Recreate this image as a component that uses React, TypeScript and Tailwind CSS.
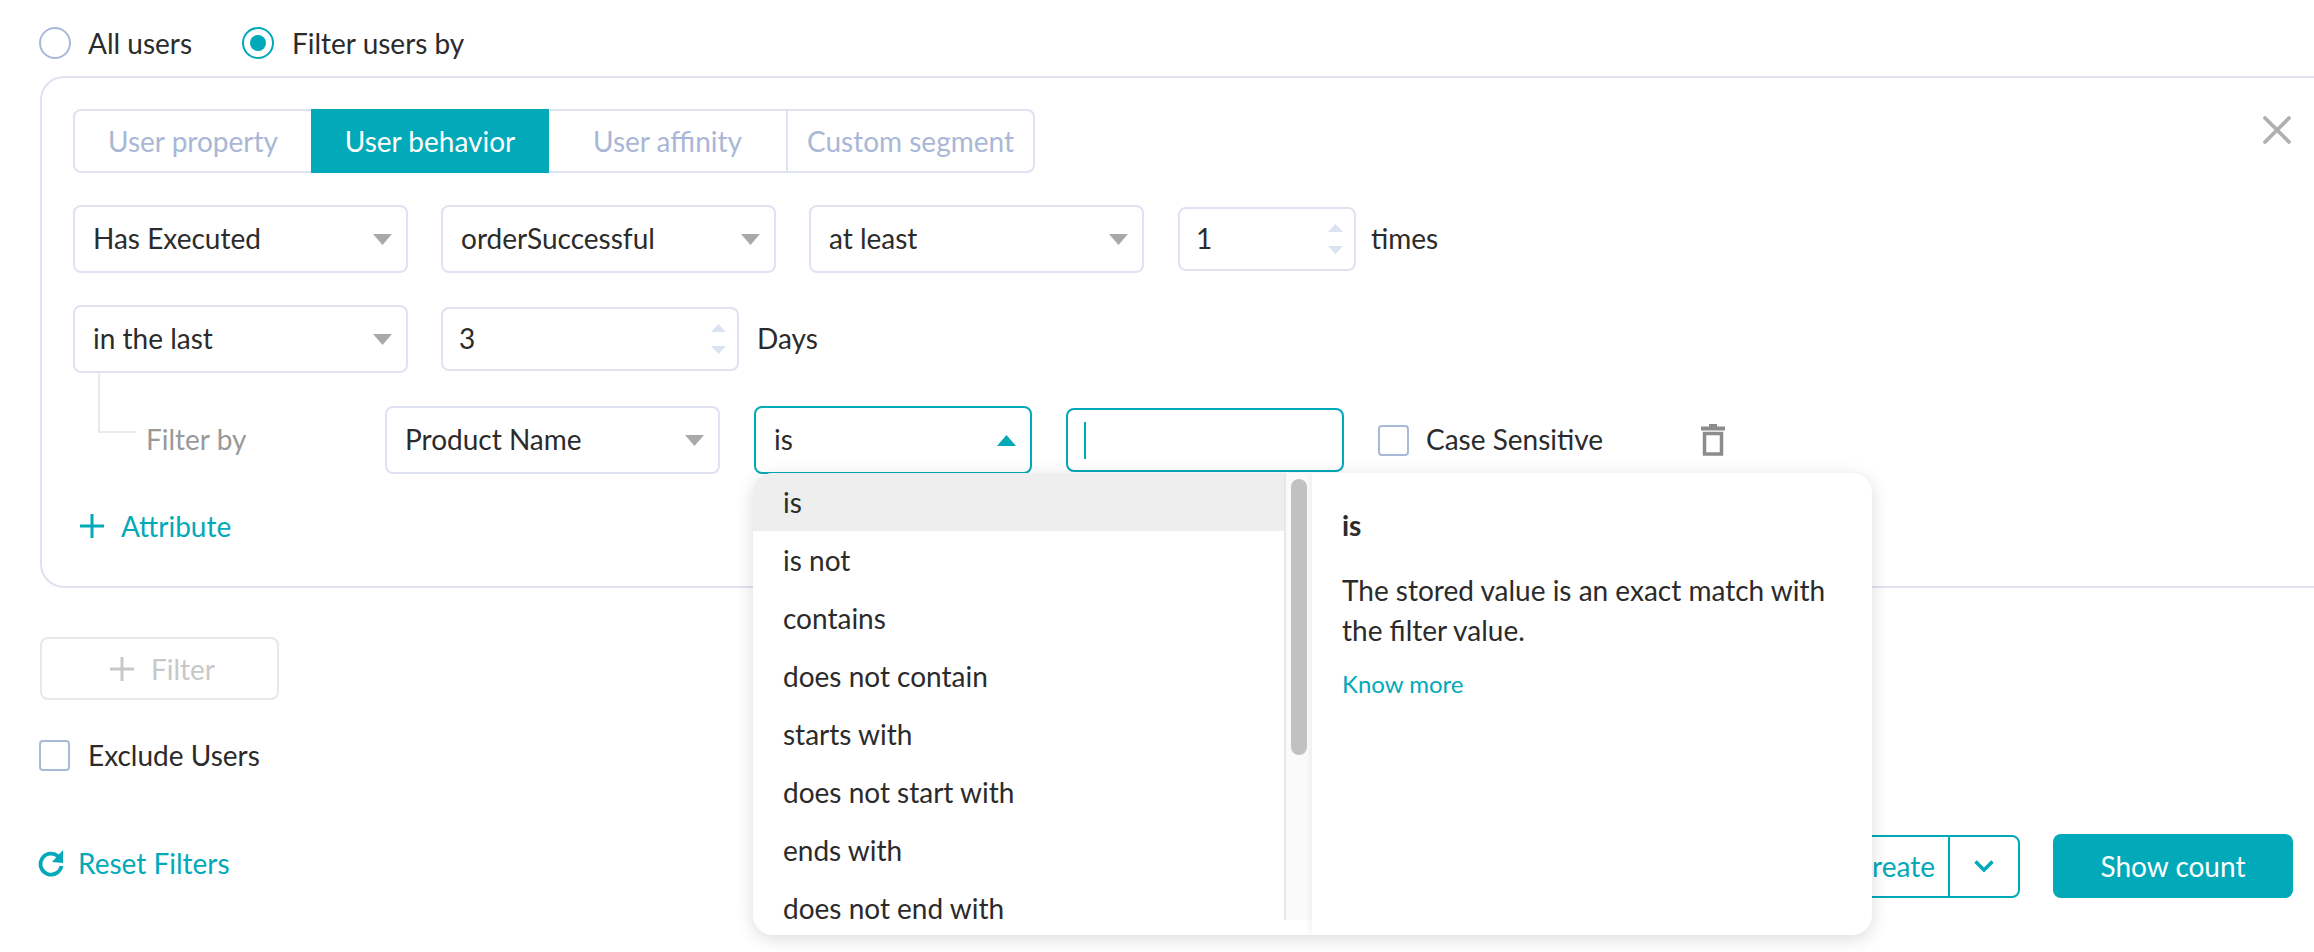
import { X } from "lucide-react";

const font = "font-['Lato','Liberation_Sans',sans-serif]";
const ops = ["is", "is not", "contains", "does not contain", "starts with", "does not start with", "ends with", "does not end with"];

function Arrow({ up = false, teal = false }: { up?: boolean; teal?: boolean }) {
  return (
    <svg width="19" height="11" viewBox="0 0 19 11" className="absolute right-[14px] top-[27px]">
      <path d={up ? "M9.5 0L19 11H0z" : "M0 0h19L9.5 11z"} fill={teal ? "#02a9b8" : "#a9a9a9"} />
    </svg>
  );
}

function PlusIcon() {
  return (
    <svg width="24" height="24" viewBox="0 0 24 24" className="shrink-0">
      <path d="M12 0v24M0 12h24" stroke="currentColor" strokeWidth="3" fill="none" />
    </svg>
  );
}

function Select({ label, w, active, up }: { label: string; w: string; active?: boolean; up?: boolean }) {
  return (
    <div className={`relative h-[68px] ${w} rounded-[8px] border-2 ${active ? "border-[#02a9b8]" : "border-[#dfe2f0]"} flex items-center pl-[18px] pb-[2px] text-[#2b2b2b] bg-white`}>
      {label}
      <Arrow up={up} teal={active} />
    </div>
  );
}

function NumInput({ value, w }: { value: string; w: string }) {
  return (
    <div className={`relative h-[64px] ${w} rounded-[8px] border-2 border-[#dfe2f0] flex items-center pl-[16px] pb-[2px] text-[#2b2b2b]`}>
      {value}
      <svg width="15" height="30" viewBox="0 0 15 30" className="absolute right-[11px] top-[15px]">
        <path d="M7.5 0L15 8H0zM0 22h15L7.5 30z" fill="#dbe2f2" />
      </svg>
    </div>
  );
}

function Box() {
  return <div className="w-[31px] h-[31px] rounded-[4px] border-2 border-[#aab8d8] shrink-0" />;
}

export default function App() {
  return (
    <div className={`${font} relative w-[2314px] h-[952px] overflow-hidden bg-white text-[28px] text-[#2b2b2b]`}>
      <div className="flex items-center h-[32px] mt-[27px] ml-[39px]">
        <div className="w-[32px] h-[32px] rounded-full border-2 border-[#aab8d8]" />
        <span className="ml-[17px] w-[154px]">All users</span>
        <div className="w-[32px] h-[32px] rounded-full border-2 border-[#02a9b8] flex items-center justify-center">
          <div className="w-[16px] h-[16px] rounded-full bg-[#02a9b8]" />
        </div>
        <span className="ml-[18px]">Filter users by</span>
      </div>

      <div className="relative mt-[17px] ml-[40px] w-[2320px] h-[512px] rounded-[24px] border-2 border-[#dfe2f0] pl-[31px] pt-[31px]">
        <div className="flex w-[962px] h-[64px] rounded-[8px] border-2 border-[#dfe2f0] text-[#a9b7d6]">
          <div className="w-[236px] flex items-center justify-center">User property</div>
          <div className="w-[238px] -my-[2px] flex items-center justify-center bg-[#02a9b8] text-white">User behavior</div>
          <div className="w-[239px] flex items-center justify-center border-r-2 border-[#dfe2f0]">User affinity</div>
          <div className="flex-1 flex items-center justify-center">Custom segment</div>
        </div>

        <div className="flex items-center gap-[33px] mt-[32px]">
          <Select label="Has Executed" w="w-[335px]" />
          <Select label="orderSuccessful" w="w-[335px]" />
          <Select label="at least" w="w-[335px]" />
          <div className="flex items-center ml-[1px]">
            <NumInput value="1" w="w-[178px]" />
            <span className="ml-[15px] mb-[2px]">times</span>
          </div>
        </div>

        <div className="flex items-center gap-[33px] mt-[32px]">
          <Select label="in the last" w="w-[335px]" />
          <div className="flex items-center">
            <NumInput value="3" w="w-[298px]" />
            <span className="ml-[18px] mb-[2px]">Days</span>
          </div>
        </div>

        <div className="flex items-center mt-[33px]">
          <div className="relative w-[73px] h-[68px]">
            <div className="absolute left-[25px] -top-[33px] w-[38px] h-[60px] border-l-2 border-b-2 border-[#eaeaea]" />
          </div>
          <span className="text-[#999999] w-[239px] mb-[2px]">Filter by</span>
          <Select label="Product Name" w="w-[335px]" />
          <div className="w-[34px]" />
          <Select label="is" w="w-[278px]" active up />
          <div className="w-[34px]" />
          <div className="w-[278px] h-[64px] rounded-[8px] border-2 border-[#02a9b8] flex items-center pl-[16px]">
            <div className="w-[2px] h-[37px] bg-[#02a9b8]" />
          </div>
          <div className="ml-[34px]"><Box /></div>
          <span className="ml-[17px] w-[275px] mb-[2px]">Case Sensitive</span>
          <svg width="24" height="32" viewBox="0 0 24 32">
            <path d="M8 0h8v2.500h8V6.500H0V2.500h8z" fill="#8c8c8c" />
            <path d="M3.500 9.500h17v20.500h-17z" fill="none" stroke="#8c8c8c" strokeWidth="3.500" />
          </svg>
        </div>

        <div className="flex items-center mt-[31px] ml-[7px] text-[#02a9b8]">
          <PlusIcon />
          <span className="ml-[17px]">Attribute</span>
        </div>

        <X className="absolute right-[57px] top-[28px] text-[#b0b0b0]" size={48} strokeWidth={1.9} />
      </div>

      <div className="mt-[49px] ml-[40px] w-[239px] h-[63px] pl-[6px] rounded-[8px] border-2 border-[#e8e8e8] flex items-center justify-center text-[#c8c8c8]">
        <PlusIcon />
        <span className="ml-[17px]">Filter</span>
      </div>

      <div className="flex items-center mt-[34px] ml-[39px]">
        <Box />
        <span className="ml-[18px]">Exclude Users</span>
      </div>

      <div className="flex items-center justify-between mt-[58px] ml-[38px] mr-[21px]">
        <div className="flex items-center mb-[6px] text-[#02a9b8]">
          <svg width="26" height="27" viewBox="0 0 26 27">
            <path d="M20 6.200A10.500 10.500 0 1 0 23.400 16" fill="none" stroke="currentColor" strokeWidth="3.800" />
            <path d="M25 0v13l-11-1z" fill="currentColor" />
          </svg>
          <span className="ml-[14px]">Reset Filters</span>
        </div>
        <div className="flex items-center">
          <div className="flex h-[63px] w-[240px] rounded-[8px] border-2 border-[#02a9b8] text-[#02a9b8]">
            <div className="flex-1 flex items-center justify-end pr-[13px] border-r-2 border-[#02a9b8]">Create</div>
            <div className="w-[68px] flex items-center justify-center">
              <svg width="20" height="13" viewBox="0 0 20 13">
                <path d="M1.500 1.500l8.500 8.500 8.500-8.500" fill="none" stroke="currentColor" strokeWidth="3.600" />
              </svg>
            </div>
          </div>
          <div className="ml-[33px] w-[240px] h-[64px] rounded-[8px] bg-[#02a9b8] text-white flex items-center justify-center">Show count</div>
        </div>
      </div>

      <div className="absolute left-[753px] top-[473px] w-[1119px] h-[462px] flex rounded-[20px] bg-white shadow-[0_4px_18px_rgba(0,0,0,0.14)] overflow-hidden">
        <div className="w-[531px]">
          {ops.map((op, i) => (
            <div key={op} className={`h-[58px] flex items-center pl-[30px] pb-[1px] ${i === 0 ? "bg-[#eeeeee]" : ""}`}>{op}</div>
          ))}
        </div>
        <div className="w-[28px] h-[447px] bg-[#fafafa] border-l-2 border-[#e8e8e8] pl-[5px] pt-[6px]">
          <div className="w-[16px] h-[276px] rounded-full bg-[#c1c1c1]" />
        </div>
        <div className="flex-1 pl-[30px] pr-[20px] shadow-[-2px_0_6px_rgba(0,0,0,0.05)]">
          <div className="mt-[32px] font-bold leading-[40px]">is</div>
          <div className="mt-[25px] leading-[40px]">The stored value is an exact match with the filter value.</div>
          <div className="mt-[16px] text-[24px] text-[#02a9b8]">Know more</div>
        </div>
      </div>
    </div>
  );
}
